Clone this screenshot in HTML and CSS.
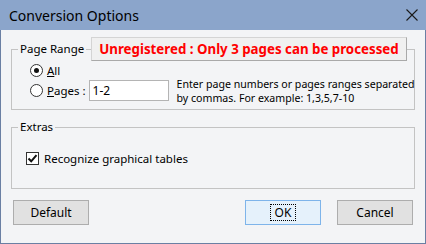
FILE: index.html
```html
<!DOCTYPE html>
<html lang="en">
<head>
  <meta charset="UTF-8" />
  <title>Conversion Options</title>
  <link rel="stylesheet" href="styles.css">
</head>
<body>
  <div class="window">
    <div class="titlebar">
      <span class="title">Conversion Options</span>
      <svg class="close" width="14" height="14" viewBox="0 0 14 14">
        <path d="M1.5 1.5 L12.5 12.5 M12.5 1.5 L1.5 12.5" stroke="#1b1b1b" stroke-width="1.1" fill="none"/>
      </svg>
    </div>

    <div class="content">
      <div class="group range">
        <div class="group-head">
          <span class="group-title">Page Range</span>
          <span class="notice">Unregistered : Only 3 pages can be processed</span>
        </div>
        <div class="row">
          <span class="radio checked"></span>
          <span class="label"><u>A</u>ll</span>
        </div>
        <div class="row pages">
          <span class="radio"></span>
          <span class="label"><u>P</u>ages :</span>
          <span class="field">1-2</span>
          <p class="hint">Enter page numbers or pages ranges separated<br>by commas. For example: 1,3,5,7-10</p>
        </div>
      </div>

      <div class="group extras">
        <div class="group-head">
          <span class="group-title">Extras</span>
        </div>
        <div class="row check-row">
          <span class="checkbox">
            <svg width="11" height="11" viewBox="0 0 11 11">
              <path d="M1.5 5.5 L4.2 8.3 L9.5 2.2" stroke="#111" stroke-width="2" fill="none"/>
            </svg>
          </span>
          <span class="label">Recognize graphical tables</span>
        </div>
      </div>

      <div class="buttons">
        <button class="btn">Default</button>
        <span class="spacer"></span>
        <button class="btn primary"><span class="focus">OK</span></button>
        <button class="btn">Cancel</button>
      </div>
    </div>
  </div>
</body>
</html>
```

FILE: styles.css
```css
body {
  margin: 0;
  font-family: "Noto Sans", "Open Sans", sans-serif;
  font-size: 11px;
  color: #000;
}

.window {
  width: 426px;
  height: 244px;
  box-sizing: border-box;
  background: #f3f4f6;
  border: 1px solid #6a7fa3;
  border-top: none;
}

.titlebar {
  height: 30px;
  margin: 0 -1px;
  background: #8ba5cb;
  display: flex;
  align-items: center;
  justify-content: space-between;
  padding: 0 7px 0 9px;
}

.title {
  font-size: 14px;
  color: #000;
}

.content {
  padding: 19px 10px 0 10px;
}

.group {
  border: 1px solid #c3c3c3;
}

.group-head {
  display: flex;
  align-items: center;
  gap: 5px;
  margin-left: 6px;
}

.range .group-head {
  margin-top: -13px;
  height: 24px;
}

.extras .group-head {
  margin-top: -9px;
  height: 16px;
}

.group-title {
  background: #f3f4f6;
  padding: 0 2px;
  font-size: 11.5px;
  line-height: 16px;
  white-space: nowrap;
}

.notice {
  height: 22px;
  line-height: 22px;
  padding: 0 7px;
  background: #f0f0f0;
  border: 1px solid #d4d4d4;
  border-right-color: #a9a9a9;
  border-bottom-color: #a9a9a9;
  color: #ff0000;
  font-weight: bold;
  font-size: 13.3px;
  white-space: nowrap;
}

.range {
  padding-bottom: 7px;
}

.row {
  display: flex;
  align-items: center;
  height: 18px;
  padding-left: 18px;
}

.range .row:first-of-type {
  margin-top: 1px;
}

.pages {
  height: 23px;
}

.radio {
  width: 11px;
  height: 11px;
  border: 1px solid #333;
  border-radius: 50%;
  background: #fff;
  position: relative;
  flex: none;
}

.radio.checked::after {
  content: "";
  position: absolute;
  left: 3px;
  top: 3px;
  width: 5px;
  height: 5px;
  border-radius: 50%;
  background: #111;
}

.label {
  margin-left: 4px;
  font-size: 11.5px;
  white-space: nowrap;
  flex: none;
}

.field {
  margin-left: 3px;
  width: 75px;
  height: 19px;
  line-height: 19px;
  padding-left: 3px;
  background: #fff;
  border: 1px solid #b4b4b4;
  font-size: 12px;
  flex: none;
}

.hint {
  margin: 0 0 0 8px;
  line-height: 14px;
  font-size: 10.6px;
  white-space: nowrap;
}

.extras {
  margin-top: 17px;
  padding-bottom: 22px;
}

.check-row {
  height: 16px;
  margin-top: 15px;
  padding-left: 14px;
}

.checkbox {
  width: 11px;
  height: 11px;
  border: 1px solid #333;
  background: #fff;
  display: flex;
  align-items: center;
  justify-content: center;
  flex: none;
}

.check-row .label {
  margin-left: 5px;
}

.buttons {
  display: flex;
  margin: 11px 2px 0 2px;
  gap: 16px;
}

.spacer {
  flex: 1;
}

.btn {
  width: 76px;
  height: 25px;
  padding: 0;
  font-family: inherit;
  font-size: 12px;
  color: #000;
  background: #e1e1e1;
  border: 1px solid #adadad;
}

.primary {
  background: #e5f1fb;
  border-color: #7eb4ea;
}

.focus {
  display: inline-block;
  padding: 0 4px;
  line-height: 15px;
  border: 1px dotted #000;
}
```
